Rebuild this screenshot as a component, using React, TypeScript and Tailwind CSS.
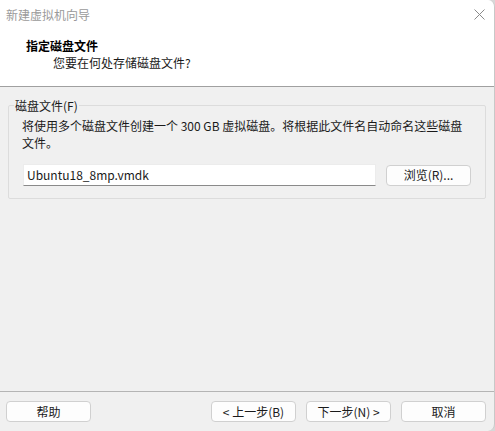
import React from "react";

const font = { fontFamily: '"Noto Sans CJK SC", "Noto Sans", sans-serif' };

function Btn({ children, className = "" }: { children: React.ReactNode; className?: string }) {
  return (
    <div
      className={`flex h-[21px] w-[85px] items-center justify-center rounded-[4px] border border-[#d0d0d0] bg-[#fdfdfd] text-[12px] leading-none text-[#1a1a1a] ${className}`}
    >
      {children}
    </div>
  );
}

export default function App() {
  return (
    <div className="h-[431px] w-[495px] overflow-hidden bg-[#d8d8d8]" style={font}>
      <div className="flex h-full w-full flex-col overflow-hidden rounded-tr-[7px] rounded-br-[7px] border-r border-[#c8c8c8] bg-[#f0f0f0]">
        {/* Title + header (white) */}
        <div className="flex h-[86px] flex-col bg-white">
          <div className="flex h-[30px] items-center justify-between pl-[6px] pr-[9px]">
            <span className="text-[12px] leading-none text-[#9a9a9a]">新建虚拟机向导</span>
            <svg width="11" height="11" viewBox="0 0 11 11" className="mt-[-1px]">
              <path d="M0.5 0.5 L10.5 10.5 M10.5 0.5 L0.5 10.5" stroke="#8a8a8a" strokeWidth="1" fill="none" />
            </svg>
          </div>
          <div className="pl-[26px] pt-[7px] text-[12px] font-bold leading-[17px] text-black">指定磁盘文件</div>
          <div className="pl-[53px] text-[12px] leading-[17px] text-[#1a1a1a]">您要在何处存储磁盘文件?</div>
        </div>
        <div className="h-px bg-[#a0a0a0]" />

        {/* Content */}
        <div className="flex flex-1 flex-col">
          <fieldset className="ml-[8px] mr-[10px] mt-[10px] rounded-[2px] border border-[#dcdcdc] pb-[12px] pl-[13px] pr-[14px]">
            <legend className="ml-[-8px] px-[1px] text-[12px] leading-[17px] text-[#1a1a1a]">磁盘文件(F)</legend>
            <p className="mt-[3px] text-[12px] leading-[17px] text-[#1a1a1a]">
              将使用多个磁盘文件创建一个 300 GB 虚拟磁盘。将根据此文件名自动命名这些磁盘文件。
            </p>
            <div className="mt-[13px] flex items-center gap-[10px]">
              <div className="ml-px flex h-[22px] w-[353px] items-center border border-[#ececec] border-b-[#8a8a8a] bg-white pl-[3px] text-[12px] leading-none text-[#1a1a1a]">
                Ubuntu18_8mp.vmdk
              </div>
              <Btn className="w-[83px]">浏览(R)...</Btn>
            </div>
          </fieldset>
        </div>

        {/* Footer */}
        <div className="h-px bg-[#b4b4b4]" />
        <div className="flex h-[39px] items-start pl-[6px] pr-[8px] pt-[9px]">
          <Btn>帮助</Btn>
          <div className="flex-1" />
          <div className="flex gap-[10px]">
            <Btn>&lt; 上一步(B)</Btn>
            <Btn>下一步(N) &gt;</Btn>
            <Btn>取消</Btn>
          </div>
        </div>
      </div>
    </div>
  );
}
